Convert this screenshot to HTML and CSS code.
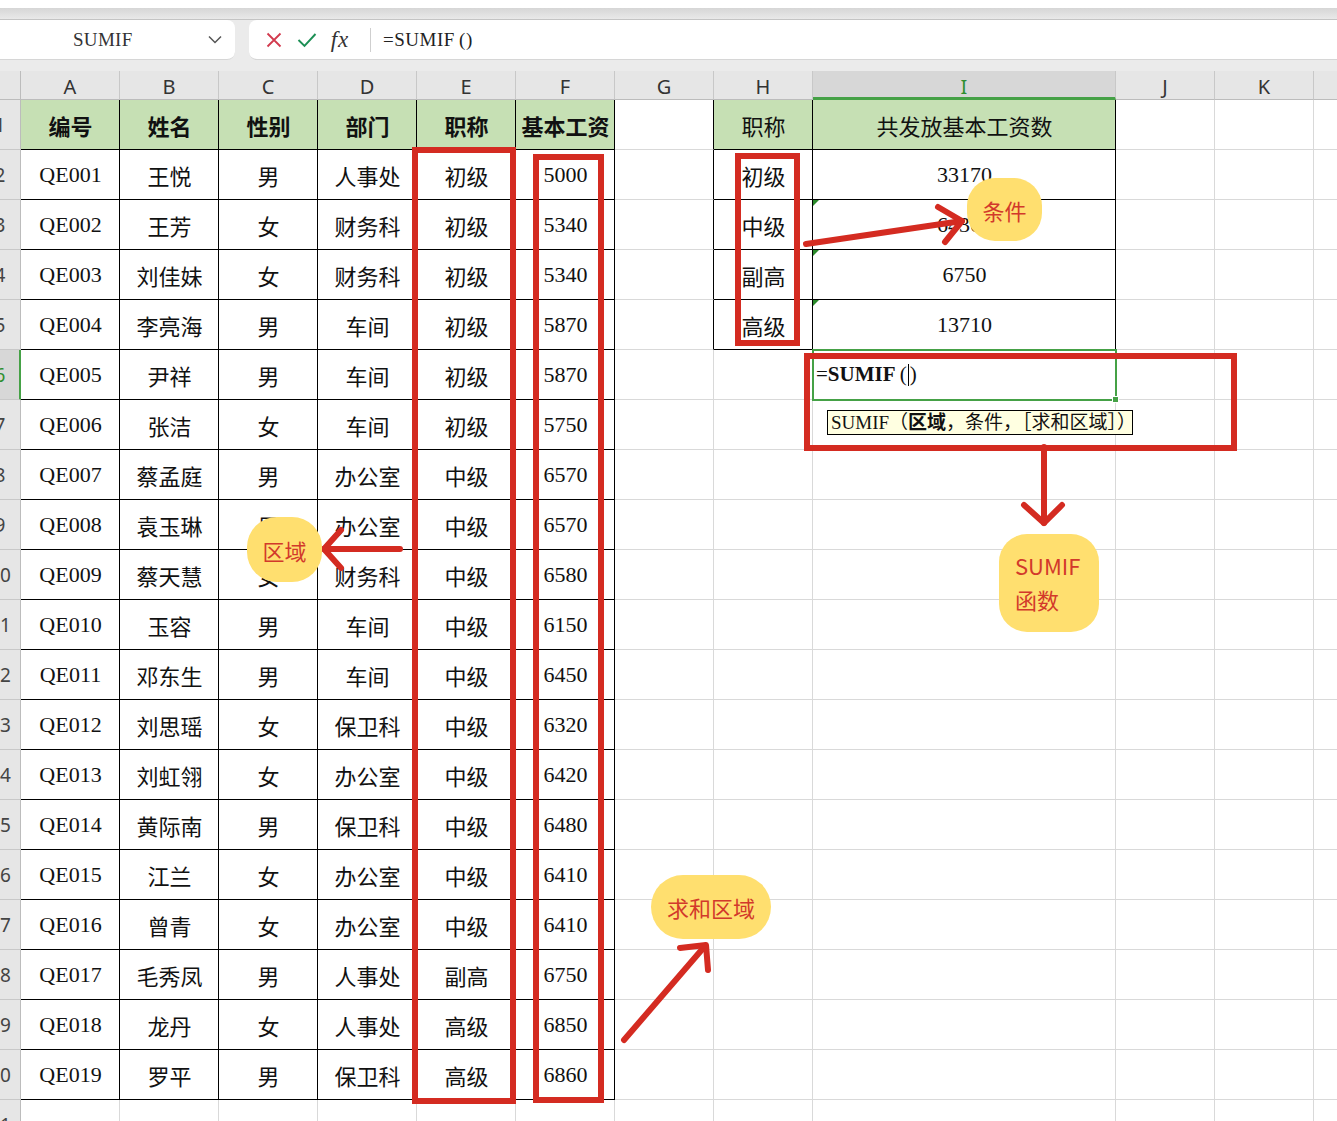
FILE: index.html
```html
<!DOCTYPE html>
<html lang="zh-CN">
<head>
<meta charset="utf-8">
<title>SUMIF</title>
<link rel="stylesheet" href="styles.css">
</head>
<body>
<div class="topstrip"></div>
<div class="tabshadow"></div>
<div class="toolbar">
  <div class="namebox">
    <span class="nb-text">SUMIF</span>
    <svg class="chev" width="14" height="9" viewBox="0 0 14 9"><path d="M1 1.5 L7 7.5 L13 1.5" fill="none" stroke="#555" stroke-width="1.5"/></svg>
  </div>
  <div class="fbar">
    <span class="ficon"><svg width="16" height="16" viewBox="0 0 16 16"><path d="M1.5 1.5 L14.5 14.5 M14.5 1.5 L1.5 14.5" stroke="#d23a4e" stroke-width="1.8" fill="none"/></svg></span>
    <span class="ficon"><svg width="20" height="16" viewBox="0 0 20 16"><path d="M1.5 8 L7.5 14 L18.5 2" stroke="#1c8f55" stroke-width="1.9" fill="none"/></svg></span>
    <span class="ficon fx">fx</span>
    <span class="fdiv"></span>
    <span class="ftext">=SUMIF&thinsp;()</span>
  </div>
</div>

<div class="sheet">
  <div class="colh corner"></div>
  <div class="colh">A</div><div class="colh">B</div><div class="colh">C</div><div class="colh">D</div><div class="colh">E</div><div class="colh">F</div><div class="colh">G</div><div class="colh">H</div><div class="colh sel">I</div><div class="colh">J</div><div class="colh">K</div><div class="colh"></div>

  <div class="rh"><span>1</span></div>
  <div class="c t hd">编号</div><div class="c t hd">姓名</div><div class="c t hd">性别</div><div class="c t hd">部门</div><div class="c t hd">职称</div><div class="c t hd">基本工资</div>
  <div class="c gb"></div><div class="c t hd2">职称</div><div class="c t hd2">共发放基本工资数</div><div class="c"></div><div class="c"></div><div class="c"></div>

  <div class="rh"><span>2</span></div>
  <div class="c t">QE001</div><div class="c t">王悦</div><div class="c t">男</div><div class="c t">人事处</div><div class="c t">初级</div><div class="c t">5000</div>
  <div class="c gb"></div><div class="c t">初级</div><div class="c t">33170</div><div class="c"></div><div class="c"></div><div class="c"></div>

  <div class="rh"><span>3</span></div>
  <div class="c t">QE002</div><div class="c t">王芳</div><div class="c t">女</div><div class="c t">财务科</div><div class="c t">初级</div><div class="c t">5340</div>
  <div class="c gb"></div><div class="c t">中级</div><div class="c t tri">64360</div><div class="c"></div><div class="c"></div><div class="c"></div>

  <div class="rh"><span>4</span></div>
  <div class="c t">QE003</div><div class="c t">刘佳妹</div><div class="c t">女</div><div class="c t">财务科</div><div class="c t">初级</div><div class="c t">5340</div>
  <div class="c gb"></div><div class="c t">副高</div><div class="c t tri">6750</div><div class="c"></div><div class="c"></div><div class="c"></div>

  <div class="rh"><span>5</span></div>
  <div class="c t">QE004</div><div class="c t">李亮海</div><div class="c t">男</div><div class="c t">车间</div><div class="c t">初级</div><div class="c t">5870</div>
  <div class="c gb"></div><div class="c t">高级</div><div class="c t tri">13710</div><div class="c"></div><div class="c"></div><div class="c"></div>

  <div class="rh rsel"><span>6</span></div>
  <div class="c t">QE005</div><div class="c t">尹祥</div><div class="c t">男</div><div class="c t">车间</div><div class="c t">初级</div><div class="c t">5870</div>
  <div class="c"></div><div class="c"></div><div class="c active">=<b>SUMIF</b>&thinsp;(<span class="caret"></span>)</div><div class="c"></div><div class="c"></div><div class="c"></div>

  <div class="rh"><span>7</span></div>
  <div class="c t">QE006</div><div class="c t">张洁</div><div class="c t">女</div><div class="c t">车间</div><div class="c t">初级</div><div class="c t">5750</div>
  <div class="c"></div><div class="c"></div><div class="c"></div><div class="c"></div><div class="c"></div><div class="c"></div>

  <div class="rh"><span>8</span></div>
  <div class="c t">QE007</div><div class="c t">蔡孟庭</div><div class="c t">男</div><div class="c t">办公室</div><div class="c t">中级</div><div class="c t">6570</div>
  <div class="c"></div><div class="c"></div><div class="c"></div><div class="c"></div><div class="c"></div><div class="c"></div>

  <div class="rh"><span>9</span></div>
  <div class="c t">QE008</div><div class="c t">袁玉琳</div><div class="c t">男</div><div class="c t">办公室</div><div class="c t">中级</div><div class="c t">6570</div>
  <div class="c"></div><div class="c"></div><div class="c"></div><div class="c"></div><div class="c"></div><div class="c"></div>

  <div class="rh"><span>10</span></div>
  <div class="c t">QE009</div><div class="c t">蔡天慧</div><div class="c t">女</div><div class="c t">财务科</div><div class="c t">中级</div><div class="c t">6580</div>
  <div class="c"></div><div class="c"></div><div class="c"></div><div class="c"></div><div class="c"></div><div class="c"></div>

  <div class="rh"><span>11</span></div>
  <div class="c t">QE010</div><div class="c t">玉容</div><div class="c t">男</div><div class="c t">车间</div><div class="c t">中级</div><div class="c t">6150</div>
  <div class="c"></div><div class="c"></div><div class="c"></div><div class="c"></div><div class="c"></div><div class="c"></div>

  <div class="rh"><span>12</span></div>
  <div class="c t">QE011</div><div class="c t">邓东生</div><div class="c t">男</div><div class="c t">车间</div><div class="c t">中级</div><div class="c t">6450</div>
  <div class="c"></div><div class="c"></div><div class="c"></div><div class="c"></div><div class="c"></div><div class="c"></div>

  <div class="rh"><span>13</span></div>
  <div class="c t">QE012</div><div class="c t">刘思瑶</div><div class="c t">女</div><div class="c t">保卫科</div><div class="c t">中级</div><div class="c t">6320</div>
  <div class="c"></div><div class="c"></div><div class="c"></div><div class="c"></div><div class="c"></div><div class="c"></div>

  <div class="rh"><span>14</span></div>
  <div class="c t">QE013</div><div class="c t">刘虹翎</div><div class="c t">女</div><div class="c t">办公室</div><div class="c t">中级</div><div class="c t">6420</div>
  <div class="c"></div><div class="c"></div><div class="c"></div><div class="c"></div><div class="c"></div><div class="c"></div>

  <div class="rh"><span>15</span></div>
  <div class="c t">QE014</div><div class="c t">黄际南</div><div class="c t">男</div><div class="c t">保卫科</div><div class="c t">中级</div><div class="c t">6480</div>
  <div class="c"></div><div class="c"></div><div class="c"></div><div class="c"></div><div class="c"></div><div class="c"></div>

  <div class="rh"><span>16</span></div>
  <div class="c t">QE015</div><div class="c t">江兰</div><div class="c t">女</div><div class="c t">办公室</div><div class="c t">中级</div><div class="c t">6410</div>
  <div class="c"></div><div class="c"></div><div class="c"></div><div class="c"></div><div class="c"></div><div class="c"></div>

  <div class="rh"><span>17</span></div>
  <div class="c t">QE016</div><div class="c t">曾青</div><div class="c t">女</div><div class="c t">办公室</div><div class="c t">中级</div><div class="c t">6410</div>
  <div class="c"></div><div class="c"></div><div class="c"></div><div class="c"></div><div class="c"></div><div class="c"></div>

  <div class="rh"><span>18</span></div>
  <div class="c t">QE017</div><div class="c t">毛秀凤</div><div class="c t">男</div><div class="c t">人事处</div><div class="c t">副高</div><div class="c t">6750</div>
  <div class="c"></div><div class="c"></div><div class="c"></div><div class="c"></div><div class="c"></div><div class="c"></div>

  <div class="rh"><span>19</span></div>
  <div class="c t">QE018</div><div class="c t">龙丹</div><div class="c t">女</div><div class="c t">人事处</div><div class="c t">高级</div><div class="c t">6850</div>
  <div class="c"></div><div class="c"></div><div class="c"></div><div class="c"></div><div class="c"></div><div class="c"></div>

  <div class="rh"><span>20</span></div>
  <div class="c t">QE019</div><div class="c t">罗平</div><div class="c t">男</div><div class="c t">保卫科</div><div class="c t">高级</div><div class="c t">6860</div>
  <div class="c"></div><div class="c"></div><div class="c"></div><div class="c"></div><div class="c"></div><div class="c"></div>

  <div class="rh"><span>21</span></div>
  <div class="c"></div><div class="c"></div><div class="c"></div><div class="c"></div><div class="c"></div><div class="c"></div>
  <div class="c"></div><div class="c"></div><div class="c"></div><div class="c"></div><div class="c"></div><div class="c"></div>
</div>

<div class="tip">SUMIF（<b>区域</b>，条件，［求和区域］）</div>

<div class="rbox box-e"></div>
<div class="rbox box-f"></div>
<div class="rbox box-h"></div>
<div class="rbox box-fx"></div>

<svg class="arrows" width="1337" height="1121" viewBox="0 0 1337 1121">
  <g fill="none" stroke="#d42b21" stroke-width="6" stroke-linecap="round" stroke-linejoin="round">
    <path d="M806 244 L962 221"/>
    <path d="M938 207 L962 221 L945 242"/>
    <path d="M400 549 L324 549"/>
    <path d="M341 530 L324 549 L341 568"/>
    <path d="M1044 447 L1044 523"/>
    <path d="M1024 505 L1044 523 L1062 505"/>
    <path d="M624 1040 L705 946"/>
    <path d="M680 948 L706 945 L708 970"/>
  </g>
</svg>

<div class="bubble b-cond">条件</div>
<div class="bubble b-area">区域</div>
<div class="bubble b-func">SUMIF<br>函数</div>
<div class="bubble b-sum">求和区域</div>
</body>
</html>
```
FILE: styles.css
```css
html, body {
  margin: 0;
  padding: 0;
}
body {
  width: 1337px;
  height: 1121px;
  overflow: hidden;
  position: relative;
  background: #fff;
  font-family: "Liberation Serif", "Noto Sans CJK SC", serif;
  color: #111;
}

/* ---------- top chrome ---------- */
.topstrip {
  height: 8px;
  background: #fff;
}
.tabshadow {
  height: 11px;
  background: linear-gradient(#d6d6d6, #e9e9e9);
  border-bottom: 1px solid #c4c4c4;
}
.toolbar {
  height: 51px;
  background: #ebebeb;
  display: flex;
  align-items: flex-start;
  gap: 14px;
}
.namebox {
  margin-left: -10px;
  width: 245px;
  height: 40px;
  box-sizing: border-box;
  background: #fff;
  border-radius: 0 8px 8px 0;
  border-bottom: 1px solid #d6d6d6;
  display: flex;
  align-items: center;
}
.nb-text {
  padding-left: 83px;
  font-family: "Liberation Serif", serif;
  font-size: 19px;
  color: #333;
  letter-spacing: 0.3px;
}
.chev {
  margin-left: auto;
  margin-right: 13px;
}
.fbar {
  flex: 1;
  height: 40px;
  box-sizing: border-box;
  background: #fff;
  border-radius: 8px 0 0 8px;
  border-bottom: 1px solid #d6d6d6;
  display: flex;
  align-items: center;
  padding-left: 13px;
  gap: 9px;
}
.ficon {
  width: 24px;
  display: flex;
  justify-content: center;
  align-items: center;
}
.fx {
  font-family: "Liberation Serif", serif;
  font-style: italic;
  font-size: 23px;
  color: #333;
  letter-spacing: 1px;
}
.fdiv {
  width: 1px;
  height: 24px;
  background: #cfcfcf;
  margin-left: 9px;
}
.ftext {
  margin-left: 3px;
  font-family: "Liberation Serif", serif;
  font-size: 19px;
  color: #222;
  letter-spacing: 0.5px;
}

/* ---------- sheet grid ---------- */
.sheet {
  display: grid;
  grid-template-columns: 21px repeat(8, 99px) 303px 99px 99px 99px;
  grid-template-rows: 29px;
  grid-auto-rows: 50px;
}
.colh {
  background: #e6e6e6;
  box-sizing: border-box;
  border-right: 1px solid #c8c8c8;
  border-bottom: 1px solid #bcbcbc;
  display: flex;
  align-items: center;
  justify-content: center;
  font-family: "Noto Sans", sans-serif;
  font-size: 20px;
  color: #333;
  padding-top: 2px;
}
.colh.corner {
  border-right-color: #bcbcbc;
}
.colh.sel {
  background: #d7d7d7;
  color: #2f8f2f;
  border-bottom: 3px solid #45a146;
  padding-top: 4px;
}
.rh {
  background: #e6e6e6;
  box-sizing: border-box;
  border-right: 1px solid #bcbcbc;
  border-bottom: 1px solid #c8c8c8;
  overflow: hidden;
  display: flex;
  align-items: center;
  font-family: "Noto Sans", sans-serif;
  font-size: 19px;
  color: #444;
}
.rh span {
  flex: none;
  width: 40px;
  margin-left: -20px;
  text-align: center;
}
.rh.rsel {
  background: #d7d7d7;
  color: #2f8f2f;
  border-right: 2px solid #45a146;
}
.c {
  box-sizing: border-box;
  border-right: 1px solid #d9d9d9;
  border-bottom: 1px solid #d9d9d9;
  display: flex;
  align-items: center;
  justify-content: center;
  font-size: 22px;
  white-space: nowrap;
  position: relative;
  padding-left: 1px;
}
.c.t {
  border-color: #000;
}
.c.gb {
  border-right-color: #000;
}
.c.hd {
  background: #c6e0b4;
  font-weight: bold;
}
.c.hd2 {
  background: #c6e0b4;
}
.c.tri::before {
  content: "";
  position: absolute;
  left: 0;
  top: 0;
  border-top: 6px solid #2a8a2a;
  border-right: 6px solid transparent;
}
.c.active {
  justify-content: flex-start;
  padding-left: 3px;
  outline: 2px solid #45a146;
  outline-offset: -1px;
  z-index: 2;
  font-size: 21px;
}
.c.active::after {
  content: "";
  position: absolute;
  right: -4px;
  bottom: -4px;
  width: 5px;
  height: 5px;
  background: #45a146;
  border: 1px solid #fff;
}
.caret {
  display: inline-block;
  width: 1px;
  height: 22px;
  background: #000;
  margin: 0 1px;
}

/* ---------- overlays ---------- */
.tip {
  position: absolute;
  left: 827px;
  top: 410px;
  width: 306px;
  height: 25px;
  box-sizing: border-box;
  background: #ffffe1;
  border: 1px solid #000;
  font-size: 19px;
  line-height: 23px;
  padding-left: 3px;
  white-space: nowrap;
  overflow: hidden;
  color: #111;
  z-index: 3;
}
.rbox {
  position: absolute;
  box-sizing: border-box;
  border: 6px solid #d42b21;
  z-index: 4;
}
.box-e { left: 412px; top: 147px; width: 104px; height: 957px; }
.box-f { left: 533px; top: 154px; width: 71px; height: 949px; }
.box-h { left: 735px; top: 153px; width: 65px; height: 193px; }
.box-fx { left: 804px; top: 353px; width: 433px; height: 98px; }

.arrows {
  position: absolute;
  left: 0;
  top: 0;
  z-index: 5;
}
.bubble {
  position: absolute;
  z-index: 6;
  background: #ffdf6f;
  color: #d2392b;
  font-family: "Noto Sans CJK SC", "Noto Sans", sans-serif;
  font-size: 22px;
  display: flex;
  align-items: center;
  justify-content: center;
  box-sizing: border-box;
}
.b-cond { left: 967px; top: 178px; width: 75px; height: 63px; border-radius: 28px; }
.b-area { left: 247px; top: 517px; width: 75px; height: 65px; border-radius: 30px; }
.b-sum { left: 651px; top: 875px; width: 120px; height: 64px; border-radius: 32px; }
.b-func {
  left: 999px;
  top: 534px;
  width: 100px;
  height: 98px;
  border-radius: 28px;
  display: block;
  padding: 14px 0 0 16px;
  line-height: 34px;
}
```
